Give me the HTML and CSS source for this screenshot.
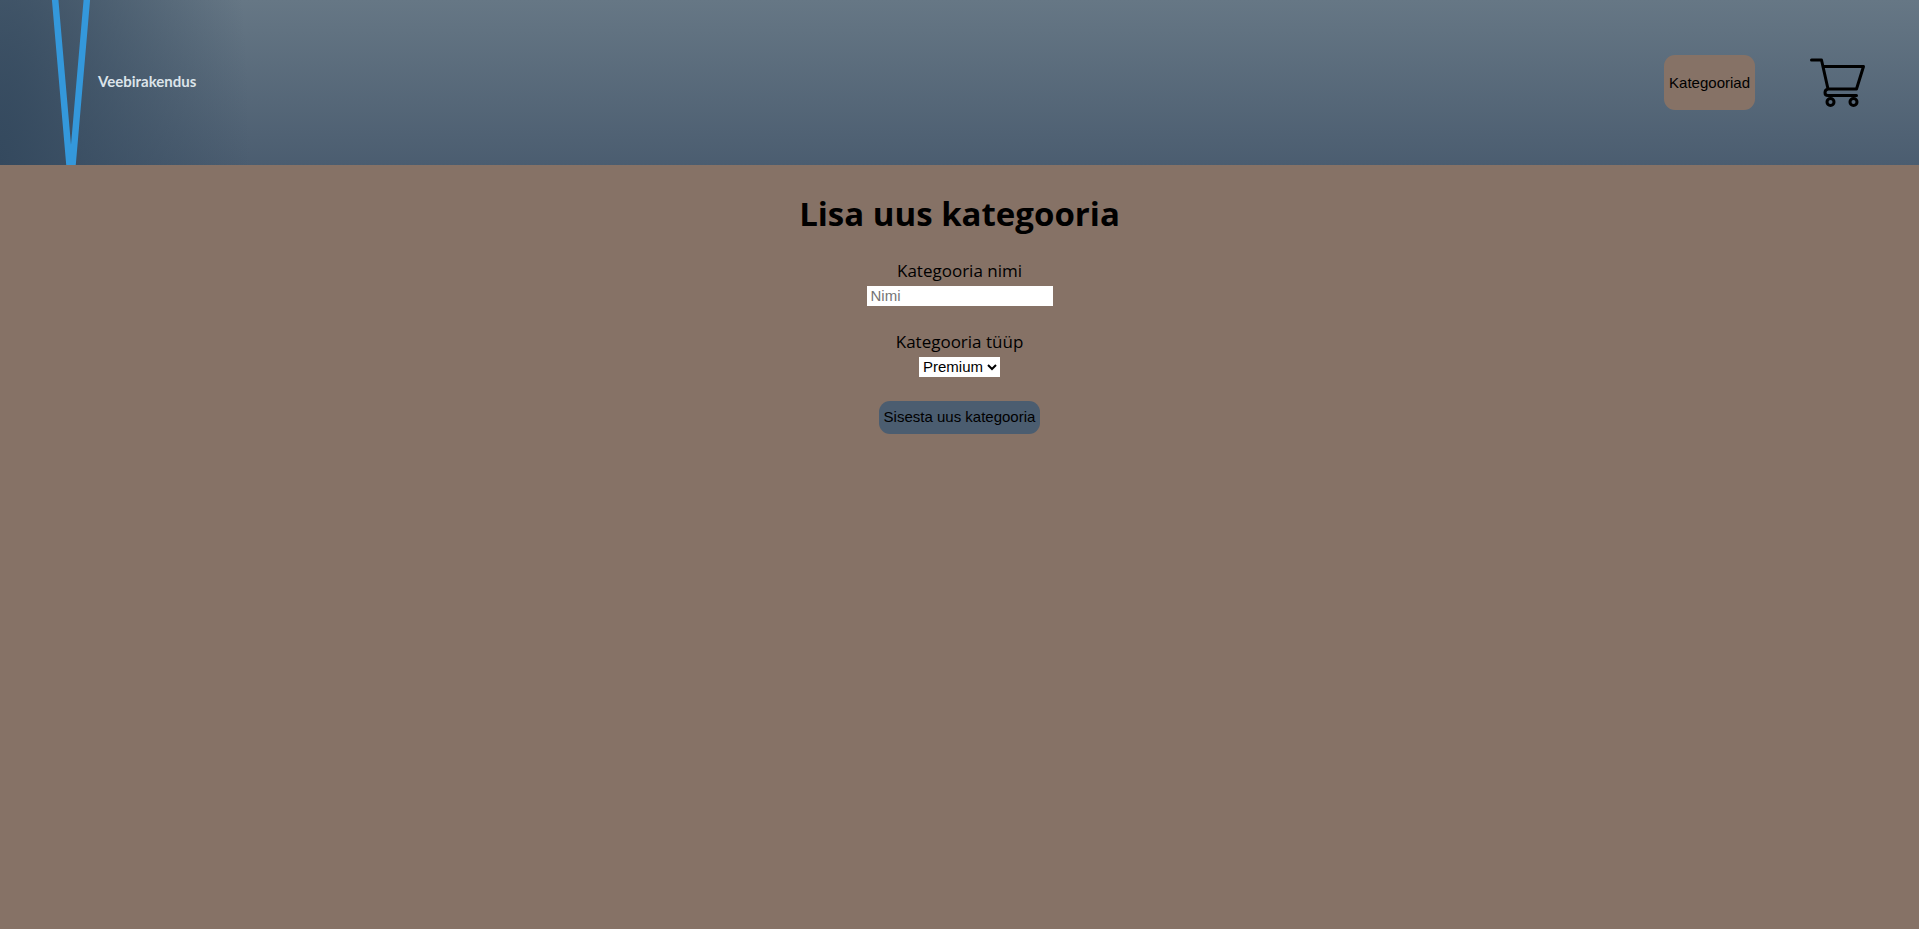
FILE: index.html
```html
<!DOCTYPE html>
<html lang="et">
<head>
<meta charset="utf-8">
<title>Lisa uus kategooria</title>
<link rel="stylesheet" href="styles.css">
</head>
<body>
<header class="header">
  <a class="logo" href="#">
    <svg class="logo-mark" viewBox="0 0 40 165" aria-hidden="true">
      <path d="M4 -2 L18.500 165 H21.500 L36 -2" fill="none" stroke="#3498db" stroke-width="6.500"/>
    </svg>
    <span class="logo-name">Veebirakendus</span>
  </a>
  <nav class="nav">
    <button class="button nav-button" type="button">Kategooriad</button>
    <a class="cart" href="#" aria-label="Ostukorv">
      <svg class="cart-icon" viewBox="0 0 56 50" fill="none" stroke="#000" stroke-width="3" stroke-linecap="round" stroke-linejoin="round" aria-hidden="true">
        <path d="M2 2H12L18.500 31H47L54 8.500H14M18.500 31C14.500 32 14.500 37.500 18.500 37.500H47"/>
        <circle cx="21" cy="44" r="3.500"/>
        <circle cx="44" cy="44" r="3.500"/>
      </svg>
    </a>
  </nav>
</header>
<main>
  <form class="form">
    <h1 class="title">Lisa uus kategooria</h1>
    <label class="label" for="name">Kategooria nimi</label>
    <input class="field name-field" id="name" type="text" placeholder="Nimi">
    <label class="label" for="type">Kategooria tüüp</label>
    <select class="field type-field" id="type">
      <option>Premium</option>
      <option>Tava</option>
    </select>
    <button class="button submit" type="button">Sisesta uus kategooria</button>
  </form>
</main>
</body>
</html>
```
FILE: styles.css
```css
* { box-sizing: border-box; }
body {
  margin: 0;
  background: #867266;
  color: #000;
  font-family: "Segoe UI", "Open Sans", sans-serif;
}
.header {
  display: flex;
  justify-content: space-between;
  align-items: center;
  background: linear-gradient(#667785, #4b5d70);
}
.logo {
  display: flex;
  align-items: center;
  gap: 7px;
  width: 260px;
  padding-left: 51px;
  text-decoration: none;
  background: radial-gradient(ellipse 250px 700px at 0 100%, #34495e, rgba(52, 73, 94, 0));
}
.logo-mark { width: 40px; height: 165px; }
.logo-name {
  padding-bottom: 3px;
  color: #dce4ea;
  font: bold 15px/20px Lato, sans-serif;
}
.nav {
  display: flex;
  align-items: center;
  gap: 54px;
  padding-right: 53px;
}
.button {
  border: 0;
  border-radius: 11px;
  color: #000;
  font: 15px/17px Arial, "Liberation Sans", sans-serif;
}
.nav-button { padding: 19px 5px; background: #867266; }
.cart-icon { display: block; width: 57px; height: 50px; }
.form {
  display: flex;
  flex-direction: column;
  align-items: center;
  padding-top: 24px;
}
.title { margin: 0 0 20px; font-size: 33px; line-height: 50px; }
.label { margin-bottom: 3px; font-size: 17px; line-height: 24px; }
.field {
  height: 20px;
  margin-bottom: 24px;
  border: 0;
  border-radius: 0;
  background: #fff;
  color: #000;
  font: 15px/17px Arial, "Liberation Sans", sans-serif;
}
.name-field { width: 186px; padding: 0 4px 2px; }
.type-field { padding: 0 0 2px; }
.submit { padding: 7px 5px 9px; background: #4b5d70; }
```
